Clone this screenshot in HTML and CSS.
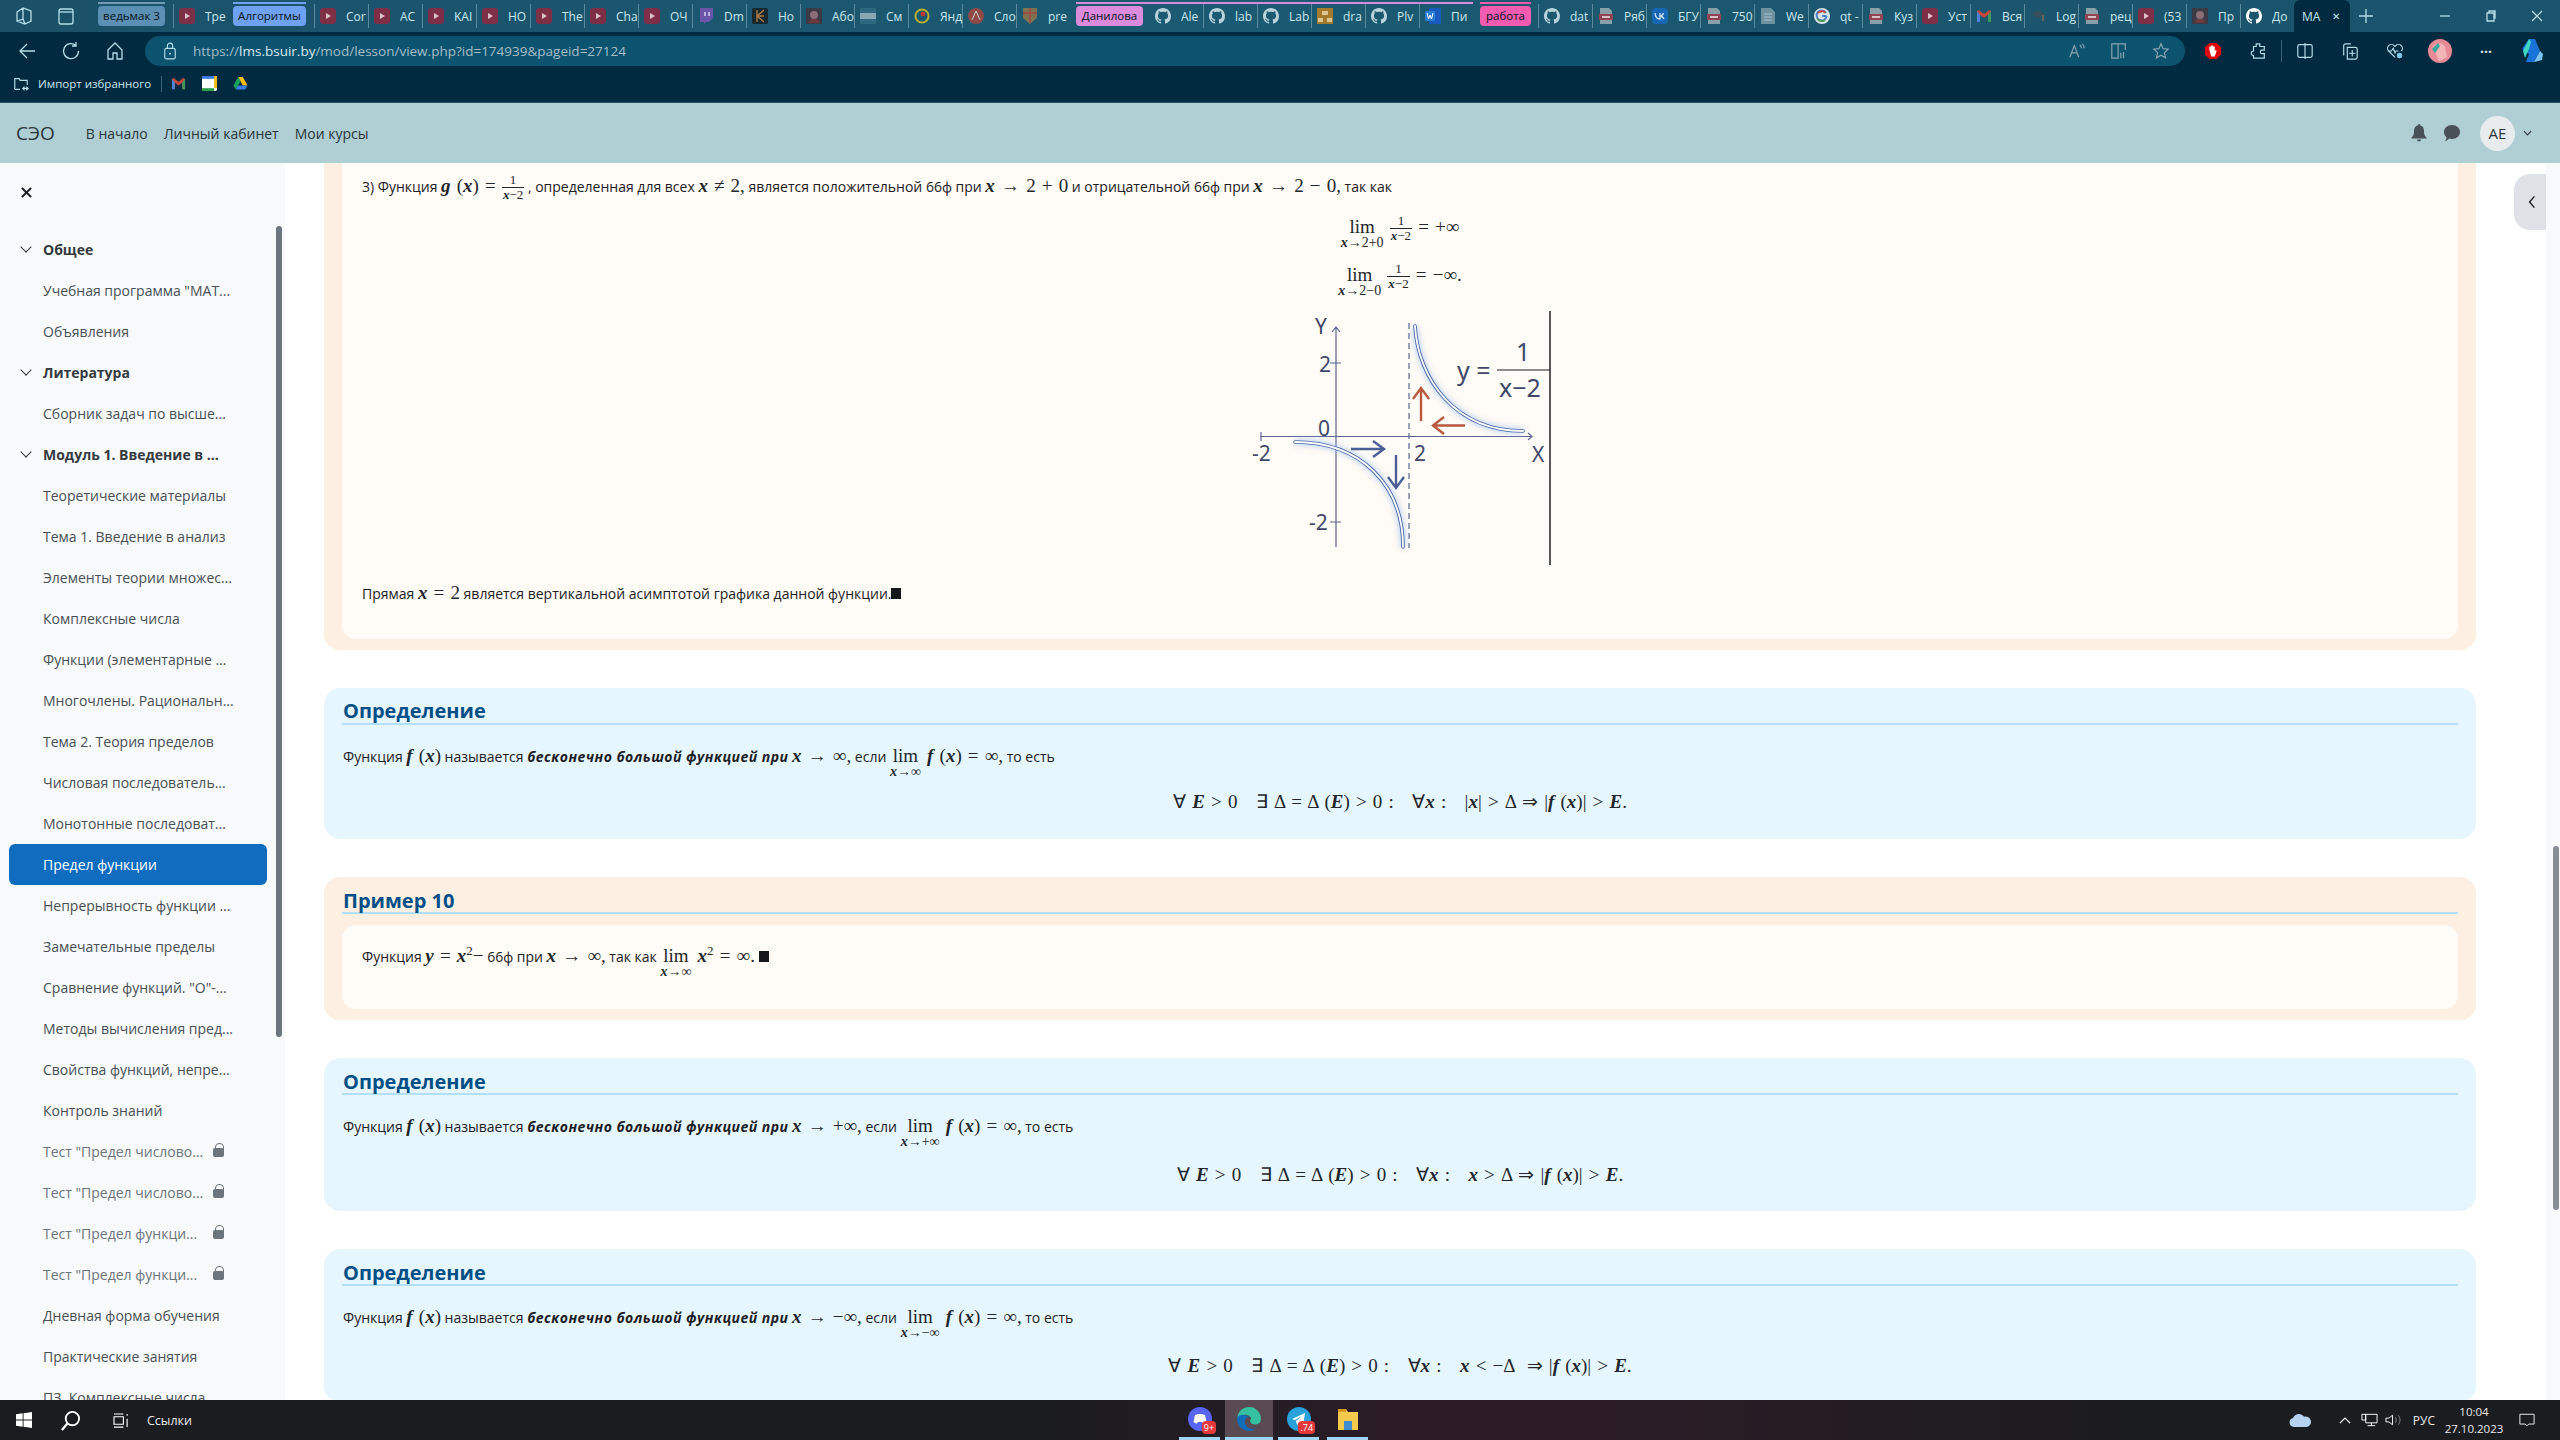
FILE: index.html
```html
<!DOCTYPE html>
<html lang="ru">
<head>
  <meta charset="UTF-8" />
  <title>Предел функции</title>
  <link rel="stylesheet" href="styles.css">
</head>
<body>
  <!-- icon sprite -->
  <svg class="sprite" xmlns="http://www.w3.org/2000/svg">
    <symbol id="yt" viewBox="0 0 16 16"><rect x="0" y="0" width="16" height="16" rx="3" fill="#7d2f47"/><path d="M6 5l5 3-5 3z" fill="#d9c3c8"/></symbol>
    <symbol id="gh" viewBox="0 0 16 16"><path fill="#b9d3dc" d="M8 0C3.58 0 0 3.58 0 8c0 3.54 2.29 6.53 5.47 7.59.4.07.55-.17.55-.38 0-.19-.01-.82-.01-1.49-2.01.37-2.53-.49-2.69-.94-.09-.23-.48-.94-.82-1.13-.28-.15-.68-.52-.01-.53.63-.01 1.08.58 1.23.82.72 1.21 1.87.87 2.33.66.07-.52.28-.87.51-1.07-1.78-.2-3.64-.89-3.64-3.95 0-.87.31-1.59.82-2.15-.08-.2-.36-1.02.08-2.12 0 0 .67-.21 2.2.82.64-.18 1.32-.27 2-.27.68 0 1.36.09 2 .27 1.53-1.04 2.2-.82 2.2-.82.44 1.1.16 1.92.08 2.12.51.56.82 1.27.82 2.15 0 3.07-1.87 3.75-3.65 3.95.29.25.54.73.54 1.48 0 1.07-.01 1.93-.01 2.2 0 .21.15.46.55.38A8.013 8.013 0 0016 8c0-4.42-3.58-8-8-8z"/></symbol>
    <symbol id="ghw" viewBox="0 0 16 16"><path fill="#fff" d="M8 0C3.58 0 0 3.58 0 8c0 3.54 2.29 6.53 5.47 7.59.4.07.55-.17.55-.38 0-.19-.01-.82-.01-1.49-2.01.37-2.53-.49-2.69-.94-.09-.23-.48-.94-.82-1.13-.28-.15-.68-.52-.01-.53.63-.01 1.08.58 1.23.82.72 1.21 1.87.87 2.33.66.07-.52.28-.87.51-1.07-1.78-.2-3.64-.89-3.64-3.95 0-.87.31-1.59.82-2.15-.08-.2-.36-1.02.08-2.12 0 0 .67-.21 2.2.82.64-.18 1.32-.27 2-.27.68 0 1.36.09 2 .27 1.53-1.04 2.2-.82 2.2-.82.44 1.1.16 1.92.08 2.12.51.56.82 1.27.82 2.15 0 3.07-1.87 3.75-3.65 3.95.29.25.54.73.54 1.48 0 1.07-.01 1.93-.01 2.2 0 .21.15.46.55.38A8.013 8.013 0 0016 8c0-4.42-3.58-8-8-8z"/></symbol>
    <symbol id="pdf" viewBox="0 0 16 16"><path d="M2 0h9l3 3v13H2z" fill="#8aa0a8"/><rect x="1" y="6" width="14" height="6" fill="#8e4452"/><rect x="4" y="8" width="8" height="2" fill="#d9c3c8"/></symbol>
    <symbol id="twitch" viewBox="0 0 16 16"><path d="M2 0h13v10l-4 4H8l-2 2v-2H2z" fill="#6a55a8"/><path d="M7 4v4M11 4v4" stroke="#d8d0ef" stroke-width="1.5"/></symbol>
    <symbol id="dark" viewBox="0 0 16 16"><rect width="16" height="16" rx="2" fill="#16282e"/><path d="M5 2v12M5 8l7-6M5 8l7 6M5 8h7" stroke="#a97a45" stroke-width="1.4"/></symbol>
    <symbol id="pic" viewBox="0 0 16 16"><rect width="16" height="16" fill="#3b3a44"/><circle cx="8" cy="7" r="4" fill="#8a6d78"/><path d="M2 15l3-4h6l3 4z" fill="#6d3a42"/></symbol>
    <symbol id="hd" viewBox="0 0 16 16"><rect width="16" height="16" fill="#2d6a80"/><rect y="5" width="16" height="6" fill="#88a8b3"/></symbol>
    <symbol id="ya" viewBox="0 0 16 16"><circle cx="8" cy="8" r="6.6" fill="none" stroke="#b5ad2c" stroke-width="2"/><circle cx="9" cy="6" r="2.4" fill="#b8382c"/></symbol>
    <symbol id="abby" viewBox="0 0 16 16"><circle cx="8" cy="8" r="8" fill="#8f4a48"/><path d="M4 12l4-9 4 9" stroke="#ccc" fill="none"/></symbol>
    <symbol id="crest" viewBox="0 0 16 16"><path d="M1 0h14v10l-7 6-7-6z" fill="#7d7352"/><path d="M8 0v15M1 5h14" stroke="#a0443f" stroke-width="1.4"/></symbol>
    <symbol id="graph" viewBox="0 0 16 16"><rect width="16" height="16" fill="#a47a2c"/><path d="M5 3h6v4H5zM1 10h5v4H1zM10 10h5v4h-5z" fill="#dcc58e"/></symbol>
    <symbol id="word" viewBox="0 0 16 16"><rect x="4" y="0" width="12" height="16" rx="1" fill="#185abd"/><rect x="0" y="3" width="10" height="10" rx="1" fill="#2b7cd3"/><path d="M2 5l1.5 6L5 7l1.5 4L8 5" stroke="#fff" stroke-width="1" fill="none"/></symbol>
    <symbol id="vk" viewBox="0 0 16 16"><rect width="16" height="16" rx="4" fill="#1767b5"/><path d="M3 5c.3 4 2.5 6 5 6V5m0 3c1.5 0 3-1.400 3.500-3M8 8c1.500 0 3 1.200 4 3" stroke="#cfe3f5" stroke-width="1.300" fill="none"/></symbol>
    <symbol id="doc" viewBox="0 0 16 16"><path d="M1 0h10l4 4v12H1z" fill="#6f92a0"/><path d="M4 6h8M4 9h8M4 12h8" stroke="#a8c0ca"/></symbol>
    <symbol id="google" viewBox="0 0 16 16"><circle cx="8" cy="8" r="8" fill="#d9e4e8"/><path d="M12.500 8H8M12 5a5 5 0 1 0 .6 3" fill="none" stroke="#4b7fc9" stroke-width="2"/><path d="M4.200 5A5 5 0 0 1 11.500 4.500" fill="none" stroke="#c9483a" stroke-width="2"/><path d="M3.500 10.500A5 5 0 0 0 11 12" fill="none" stroke="#4a9a58" stroke-width="2"/></symbol>
    <symbol id="gmail" viewBox="0 0 16 16"><path d="M1 3v11h3V7l4 3 4-3v7h3V3l-2-1-5 4-5-4z" fill="#c5453b"/><path d="M1 3v11h3V7z" fill="#4a84d8"/><path d="M12 7v7h3V3z" fill="#3d9a5b"/></symbol>
    <symbol id="cap" viewBox="0 0 16 16"><path d="M1 6l7-4 7 4-7 4z" fill="#35505b"/><path d="M13 7v6" stroke="#a97a45"/></symbol>
    <symbol id="cal" viewBox="0 0 16 16"><rect width="16" height="16" rx="1.500" fill="#fff"/><path d="M0 0h16v3H0z" fill="#3b79e4"/><path d="M13 0h3v13h-3z" fill="#f1bb12"/><path d="M0 13h13v3H0z" fill="#28a14e"/></symbol>
    <symbol id="drive" viewBox="0 0 16 16"><path d="M5.500 1h5l5 9h-5z" fill="#f8bf16"/><path d="M5.500 1L.5 10l2.500 4.500L8 5.500z" fill="#18a15b"/><path d="M5.500 10h10L13 14.500H3z" fill="#3a7de8"/></symbol>
  </svg>

  <!-- tab strip -->
  <div class="tabstrip">
    <svg class="strip-icon" viewBox="0 0 20 20" width="20" height="20"><path d="M3 6l6-4 8 3v10l-6 3-8-3z M9 2v11l-6 2 M9 13l2 5" class="line"/></svg>
    <svg class="strip-icon" viewBox="0 0 20 20" width="20" height="20"><rect x="3" y="3" width="14" height="15" rx="2" class="line"/><path d="M3 6h14" class="line"/></svg>

    <div class="tab-group group-steel"><span class="pill">ведьмак 3</span></div>
    <div class="tab"><svg class="fav"><use href="#yt"/></svg><span>Тре</span></div>
    <div class="tab-group group-blue"><span class="pill">Алгоритмы</span></div>
    <div class="tab"><svg class="fav"><use href="#yt"/></svg><span>Cor</span></div>
    <div class="tab"><svg class="fav"><use href="#yt"/></svg><span>AC</span></div>
    <div class="tab"><svg class="fav"><use href="#yt"/></svg><span>KAI</span></div>
    <div class="tab"><svg class="fav"><use href="#yt"/></svg><span>HO</span></div>
    <div class="tab"><svg class="fav"><use href="#yt"/></svg><span>The</span></div>
    <div class="tab"><svg class="fav"><use href="#yt"/></svg><span>Cha</span></div>
    <div class="tab"><svg class="fav"><use href="#yt"/></svg><span>ОЧ</span></div>
    <div class="tab"><svg class="fav"><use href="#twitch"/></svg><span>Dm</span></div>
    <div class="tab"><svg class="fav"><use href="#dark"/></svg><span>Ho</span></div>
    <div class="tab"><svg class="fav"><use href="#pic"/></svg><span>Або</span></div>
    <div class="tab"><svg class="fav"><use href="#hd"/></svg><span>См</span></div>
    <div class="tab"><svg class="fav"><use href="#ya"/></svg><span>Янд</span></div>
    <div class="tab"><svg class="fav"><use href="#abby"/></svg><span>Сло</span></div>
    <div class="tab"><svg class="fav"><use href="#crest"/></svg><span>pre</span></div>
    <div class="tab-group group-violet">
      <span class="pill">Данилова</span>
      <div class="tab first"><svg class="fav"><use href="#gh"/></svg><span>Ale</span></div>
      <div class="tab"><svg class="fav"><use href="#gh"/></svg><span>lab</span></div>
      <div class="tab"><svg class="fav"><use href="#gh"/></svg><span>Lab</span></div>
      <div class="tab"><svg class="fav"><use href="#graph"/></svg><span>dra</span></div>
      <div class="tab"><svg class="fav"><use href="#gh"/></svg><span>Plv</span></div>
      <div class="tab"><svg class="fav"><use href="#word"/></svg><span>Пи</span></div>
    </div>
    <div class="tab-group group-pink"><span class="pill">работа</span></div>
    <div class="tab"><svg class="fav"><use href="#gh"/></svg><span>dat</span></div>
    <div class="tab"><svg class="fav"><use href="#pdf"/></svg><span>Ряб</span></div>
    <div class="tab"><svg class="fav"><use href="#vk"/></svg><span>БГУ</span></div>
    <div class="tab"><svg class="fav"><use href="#pdf"/></svg><span>750</span></div>
    <div class="tab"><svg class="fav"><use href="#doc"/></svg><span>We</span></div>
    <div class="tab"><svg class="fav"><use href="#google"/></svg><span>qt -</span></div>
    <div class="tab"><svg class="fav"><use href="#pdf"/></svg><span>Куз</span></div>
    <div class="tab"><svg class="fav"><use href="#yt"/></svg><span>Уст</span></div>
    <div class="tab"><svg class="fav"><use href="#gmail"/></svg><span>Вся</span></div>
    <div class="tab"><svg class="fav"><use href="#cap"/></svg><span>Log</span></div>
    <div class="tab"><svg class="fav"><use href="#pdf"/></svg><span>рец</span></div>
    <div class="tab"><svg class="fav"><use href="#yt"/></svg><span>(53</span></div>
    <div class="tab"><svg class="fav"><use href="#pic"/></svg><span>Пр</span></div>
    <div class="tab"><svg class="fav"><use href="#ghw"/></svg><span>До</span></div>
    <div class="tab-active"><span>MA</span><b>✕</b></div>
    <svg class="new-tab" viewBox="0 0 16 16" width="16" height="16"><path d="M8 1v14M1 8h14" class="line"/></svg>

    <div class="win-controls">
      <svg viewBox="0 0 12 12" width="12" height="12"><path d="M1 6h10" class="line"/></svg>
      <svg viewBox="0 0 12 12" width="12" height="12"><path d="M2 3h7v8H2zM4 3V1h6v7H9" class="line"/></svg>
      <svg viewBox="0 0 12 12" width="12" height="12"><path d="M1 1l10 10M11 1L1 11" class="line"/></svg>
    </div>
  </div>

  <!-- toolbar -->
  <div class="toolbar">
    <div class="nav-btns">
      <svg viewBox="0 0 20 20" width="20" height="20"><path d="M18 10H3M10 3l-7 7 7 7" class="line"/></svg>
      <svg viewBox="0 0 20 20" width="20" height="20"><path d="M15 4.500A7.500 7.500 0 1 0 17.500 10M15 1v4h-4" class="line"/></svg>
      <svg viewBox="0 0 20 20" width="20" height="20"><path d="M3 9l7-7 7 7v9h-5v-6H8v6H3z" class="line"/></svg>
    </div>
    <div class="addressbar">
      <svg class="lock" viewBox="0 0 16 20" width="14" height="18"><rect x="2" y="7" width="12" height="12" rx="2" class="line"/><path d="M5 7V4a3 3 0 0 1 6 0v3" class="line"/><circle cx="8" cy="13" r="1" fill="#d7ebf2"/></svg>
      <span class="url">https://<em>lms.bsuir.by</em>/mod/lesson/view.php?id=174939&amp;pageid=27124</span>
      <div class="addr-actions">
        <svg viewBox="0 0 20 20" width="18" height="18"><path d="M2 17L7 4l5 13M4 12h6M13 3a5 5 0 0 1 2 4M16 2a7 7 0 0 1 2 5" class="dim"/></svg>
        <svg viewBox="0 0 20 20" width="18" height="18"><path d="M2 2h7v16H2zM9 2h8v7M12 12v6M15 11v7" class="dim"/></svg>
        <svg viewBox="0 0 20 20" width="18" height="18"><path d="M10 2l2.400 5.400 5.600.6-4.200 3.800 1.200 5.700L10 14.600 5 17.500l1.200-5.700L2 8l5.600-.6z" class="dim"/></svg>
      </div>
    </div>
    <div class="tool-icons">
      <svg viewBox="0 0 20 20" width="18" height="20"><path d="M6 1h8l5 5v8l-5 5H6l-5-5V6z" fill="#e0060b"/><path d="M6 9V5h2v4-5h2v5-4h2v5l1-1 1 1-2 6H8z" fill="#fff"/></svg>
      <svg viewBox="0 0 20 20" width="18" height="20"><path d="M8 2h4v3h5v4h-2.500a2 2 0 0 0 0 4H17v5H5v-3a2.500 2.500 0 0 1 0-5V5h3z" class="line"/></svg>
      <i class="tool-sep"></i>
      <svg viewBox="0 0 20 20" width="18" height="20"><rect x="2" y="3" width="16" height="14" rx="2" class="line"/><path d="M10 1v18" class="line"/></svg>
      <svg viewBox="0 0 20 20" width="18" height="20"><path d="M3 15V4a2 2 0 0 1 2-2h6M7 6h9a2 2 0 0 1 2 2v9a2 2 0 0 1-2 2H7zM12.500 9v7M9 12.500h7" class="line"/></svg>
      <svg viewBox="0 0 20 20" width="18" height="20"><path d="M10 17L3 10a4 4 0 0 1 6-6l1 1 1-1a4 4 0 0 1 6 6M2 10h4l2-3 2 5 1-2h3" class="line"/><circle cx="15" cy="15" r="3" fill="#7ec8e8"/></svg>
      <svg class="profile" viewBox="0 0 24 24" width="24" height="24"><circle cx="12" cy="12" r="12" fill="#e68a97"/><path d="M5 8c4-6 10-4 12 0l2 10-8 4z" fill="#f3b6b8"/><path d="M4 10l6-6 2 3-5 7z" fill="#35a8a0"/></svg>
      <span class="more">···</span>
      <svg viewBox="0 0 24 26" width="24" height="26"><path d="M9 1h6l5 12-6 11H6l3-8-7-5z" fill="#1a73d8"/><path d="M9 1L3 13l2 7 4-9 2-7z" fill="#3ed6c4"/><path d="M20 13l-6 11 8-2 1-6z" fill="#7ac4f4"/></svg>
    </div>
  </div>

  <!-- bookmarks -->
  <div class="bookmarks">
    <svg viewBox="0 0 18 18" width="16" height="16"><path d="M2 15V3h5l1 2h8v5M2 15h6M11 14h6M13 12l-2 2 2 2M15 12l2 2-2 2" class="line"/></svg>
    <span class="bm-label">Импорт избранного</span>
    <i class="bm-sep"></i>
    <svg class="bm-icon"><use href="#gmail"/></svg>
    <svg class="bm-icon"><use href="#cal"/></svg>
    <svg class="bm-icon"><use href="#drive"/></svg>
  </div>

  <!-- site navbar -->
  <nav class="navbar">
    <a class="brand">СЭО</a>
    <a class="nav-link">В начало</a>
    <a class="nav-link">Личный кабинет</a>
    <a class="nav-link">Мои курсы</a>
    <div class="nav-right">
      <svg viewBox="0 0 16 18" width="16" height="18"><path d="M8 0a1.500 1.500 0 0 1 1.500 1.500C12 2.200 13 4.500 13 7c0 4 1 5 2.500 6.500v1h-15v-1C2 12 3 11 3 7c0-2.500 1-4.800 3.500-5.500A1.500 1.500 0 0 1 8 0zM6 15.500h4a2 2 0 0 1-4 0z" fill="#495057"/></svg>
      <svg viewBox="0 0 18 18" width="18" height="18"><path d="M9 1c4.500 0 8 3 8 7s-3.500 7-8 7c-1 0-2-.2-2.800-.5C5 15.500 3.500 17 2 17c1-1 1.500-2.500 1.500-3.500C2 12 1 10 1 8c0-4 3.500-7 8-7z" fill="#495057"/></svg>
      <span class="avatar">AE</span>
      <svg viewBox="0 0 10 6" width="9" height="6"><path d="M1 1l4 4 4-4" fill="none" stroke="#343a40" stroke-width="1.300"/></svg>
    </div>
  </nav>

  <div class="page">
    <aside class="sidebar">
      <svg class="close-x" viewBox="0 0 12 12" width="11" height="11"><path d="M1 1l10 10M11 1L1 11" fill="none" stroke="#1d2125" stroke-width="2.200"/></svg>
      <ul class="course-index">
        <li class="section">Общее</li>
        <li>Учебная программа "МАТ...</li>
        <li>Объявления</li>
        <li class="section">Литература</li>
        <li>Сборник задач по высше...</li>
        <li class="section">Модуль 1. Введение в ...</li>
        <li>Теоретические материалы</li>
        <li>Тема 1. Введение в анализ</li>
        <li>Элементы теории множес...</li>
        <li>Комплексные числа</li>
        <li>Функции (элементарные ...</li>
        <li>Многочлены. Рациональн...</li>
        <li>Тема 2. Теория пределов</li>
        <li>Числовая последователь...</li>
        <li>Монотонные последоват...</li>
        <li class="active">Предел функции</li>
        <li>Непрерывность функции ...</li>
        <li>Замечательные пределы</li>
        <li>Сравнение функций. "О"-...</li>
        <li>Методы вычисления пред...</li>
        <li>Свойства функций, непре...</li>
        <li>Контроль знаний</li>
        <li class="locked">Тест "Предел числово...</li>
        <li class="locked">Тест "Предел числово...</li>
        <li class="locked">Тест "Предел функци...</li>
        <li class="locked">Тест "Предел функци...</li>
        <li>Дневная форма обучения</li>
        <li>Практические занятия</li>
        <li>ПЗ. Комплексные числа</li>
      </ul>
      <div class="side-scroll"></div>
    </aside>

    <main class="content">
      <!-- scrolled example -->
      <section class="card card-ex card-cut">
        <div class="card-inner inner-cut">
          <p class="row">3) Функция <span class="m"><i>g</i> (<i>x</i>) = <span class="frac"><span>1</span><span class="den"><i>x</i>−2</span></span></span> , определенная для всех <span class="m"><i>x</i> ≠ 2,</span> является положительной 66ф при <span class="m"><i>x</i> → 2 + 0</span> и отрицательной 66ф при <span class="m"><i>x</i> → 2 − 0,</span> так как</p>
          <p class="row center lim-row"><span class="m"><span class="lim">lim<small><i>x</i>→2+0</small></span> <span class="frac"><span>1</span><span class="den"><i>x</i>−2</span></span> = +∞</span></p>
          <p class="row center lim-row second"><span class="m"><span class="lim">lim<small><i>x</i>→2−0</small></span> <span class="frac"><span>1</span><span class="den"><i>x</i>−2</span></span> = −∞.</span></p>
          <svg class="graph" viewBox="0 0 360 280" width="360" height="280">
            <defs><filter id="glow" x="-20%" y="-20%" width="140%" height="140%"><feGaussianBlur stdDeviation="3"/></filter></defs>
            <path d="M40 137.500H312M308 134l4 3.500-4 3.500M41 133v9M116 28v220M112 33l4-5 4 5M110 64h11M110 223h11" fill="none" stroke="#5a6590" stroke-width="1.200"/>
            <path d="M189 24v225" stroke="#5a6590" stroke-width="1.200" stroke-dasharray="6 4"/>
            <path d="M195 27C198 80 235 132 303 132M75 143C140 143 183 185 183 248" fill="none" stroke="#9cc0ee" stroke-width="4" filter="url(#glow)"/>
            <path d="M195 27C198 80 235 132 303 132M75 143C140 143 183 185 183 248" fill="none" stroke="#4a68a8" stroke-width="3.600" stroke-linecap="round"/>
            <path d="M195 27C198 80 235 132 303 132M75 143C140 143 183 185 183 248" fill="none" stroke="#fff" stroke-width="1.800" stroke-linecap="round"/>
            <path d="M201 122V90M193 100l8-11 8 11M245 126.500H213M224 118l-11 8.500 11 8.500" fill="none" stroke="#b9583f" stroke-width="2.400"/>
            <path d="M131 150h33M153 142l11 8-11 8M176 156v32M168 178l8 11 8-11" fill="none" stroke="#4a5f95" stroke-width="2.400"/>
            <path d="M277 71h53" stroke="#1d2125" stroke-width="1.200"/>
            <path d="M330 12v254" stroke="#1d2125" stroke-width="1.500"/>
            <g class="graph-text">
              <text x="95" y="35">Y</text>
              <text x="99" y="73">2</text>
              <text x="98" y="137">0</text>
              <text x="32" y="162">-2</text>
              <text x="194" y="162">2</text>
              <text x="312" y="163">X</text>
              <text x="89" y="231">-2</text>
              <text x="237" y="81" class="big">y =</text>
              <text x="296" y="62" class="big">1</text>
              <text x="279" y="98" class="big">x−2</text>
            </g>
          </svg>
          <p class="row row-last">Прямая <span class="m"><i>x</i> = 2</span> является вертикальной асимптотой графика данной функции.<span class="qed"></span></p>
        </div>
      </section>

      <section class="card card-def">
        <h3 class="card-title">Определение</h3>
        <p class="row text-row">Функция <span class="m"><i>f</i> (<i>x</i>)</span> называется <b><i>бесконечно большой функцией при</i></b> <span class="m"><i>x</i> → ∞,</span> если <span class="m"><span class="lim">lim<small><i>x</i>→∞</small></span> <i>f</i> (<i>x</i>) = ∞,</span> то есть</p>
        <p class="row center formula"><span class="m">∀ <i>E</i> &gt; 0 &nbsp; ∃ Δ = Δ (<i>E</i>) &gt; 0 : &nbsp; ∀<i>x</i> : &nbsp; |<i>x</i>| &gt; Δ ⇒ |<i>f</i> (<i>x</i>)| &gt; <i>E</i>.</span></p>
      </section>

      <section class="card card-ex">
        <h3 class="card-title">Пример 10</h3>
        <div class="card-inner inner-short">
          <p class="row">Функция <span class="m"><i>y</i> = <i>x</i><sup>2</sup>−</span> 66ф при <span class="m"><i>x</i> → ∞,</span> так как <span class="m"><span class="lim">lim<small><i>x</i>→∞</small></span> <i>x</i><sup>2</sup> = ∞.</span> <span class="qed"></span></p>
        </div>
      </section>

      <section class="card card-def card-wide">
        <h3 class="card-title">Определение</h3>
        <p class="row text-row">Функция <span class="m"><i>f</i> (<i>x</i>)</span> называется <b><i>бесконечно большой функцией при</i></b> <span class="m"><i>x</i> → +∞,</span> если <span class="m"><span class="lim">lim<small><i>x</i>→+∞</small></span> <i>f</i> (<i>x</i>) = ∞,</span> то есть</p>
        <p class="row center formula"><span class="m">∀ <i>E</i> &gt; 0 &nbsp; ∃ Δ = Δ (<i>E</i>) &gt; 0 : &nbsp; ∀<i>x</i> : &nbsp; <i>x</i> &gt; Δ ⇒ |<i>f</i> (<i>x</i>)| &gt; <i>E</i>.</span></p>
      </section>

      <section class="card card-def card-wide">
        <h3 class="card-title">Определение</h3>
        <p class="row text-row">Функция <span class="m"><i>f</i> (<i>x</i>)</span> называется <b><i>бесконечно большой функцией при</i></b> <span class="m"><i>x</i> → −∞,</span> если <span class="m"><span class="lim">lim<small><i>x</i>→−∞</small></span> <i>f</i> (<i>x</i>) = ∞,</span> то есть</p>
        <p class="row center formula"><span class="m">∀ <i>E</i> &gt; 0 &nbsp; ∃ Δ = Δ (<i>E</i>) &gt; 0 : &nbsp; ∀<i>x</i> : &nbsp; <i>x</i> &lt; −Δ &nbsp;⇒ |<i>f</i> (<i>x</i>)| &gt; <i>E</i>.</span></p>
      </section>

      <div class="drawer-toggle"><svg viewBox="0 0 10 16" width="8" height="14"><path d="M8 1L2 8l6 7" fill="none" stroke="#1d2125" stroke-width="1.800"/></svg></div>
      <div class="page-scroll"><div class="page-thumb"></div></div>
    </main>
  </div>

  <!-- windows taskbar -->
  <footer class="taskbar">
    <svg class="tb-start" viewBox="0 0 18 18" width="16" height="16"><path d="M0 2.500l7.500-1v7H0zM8.500 1.300L18 0v8.500H8.500zM0 9.500h7.500v7l-7.500-1zM8.500 9.500H18V18l-9.500-1.300z" fill="#fff"/></svg>
    <svg class="tb-search" viewBox="0 0 22 22" width="21" height="21"><circle cx="13" cy="9" r="7" fill="none" stroke="#fff" stroke-width="2"/><path d="M8 14l-6 7" stroke="#fff" stroke-width="2.400"/></svg>
    <svg class="tb-view" viewBox="0 0 18 16" width="17" height="15"><path d="M1 1h10M1 15h10M1 4h10v8H1zM15 1v2M15 6v9" fill="none" stroke="#fff" stroke-width="1.200"/></svg>
    <span class="tb-links">Ссылки</span>
    <div class="tb-apps">
      <span class="tb-app"><svg viewBox="0 0 24 24" width="24" height="24"><circle cx="12" cy="12" r="12" fill="#5865f2"/><path d="M7 8c3-1.500 7-1.500 10 0l1.500 7c-1.500 1-3 1.500-3.500 1.500l-1-1.500h-4l-1 1.500c-.5 0-2-.5-3.500-1.500z" fill="#fff"/></svg><b class="badge">9+</b></span>
      <span class="tb-app current"><svg viewBox="0 0 24 24" width="26" height="26"><path d="M12 1a11 11 0 0 1 11 11c0 3-2 5-5 5-3 0-5-1.500-5-3.500 0-1 .5-1.500 1-2C13 9 10 7.500 7 8.500 3.500 9.500 1 13 1.500 9 2.500 4.500 7 1 12 1z" fill="#35c1a0"/><path d="M1 12c0 6 5 11 11 11 3 0 5-1 6.500-2.500-4 1.500-8 0-9.500-3C7 13.500 9 10 12.500 10 9 8 1 7 1 12z" fill="#0f6db8"/></svg></span>
      <span class="tb-app"><svg viewBox="0 0 24 24" width="24" height="24"><circle cx="12" cy="12" r="12" fill="#2aa1da"/><path d="M5 12l13-6-2 13-4-3-2 2-1-4 6-5-7 4z" fill="#fff"/></svg><b class="badge">.74</b></span>
      <span class="tb-app"><svg viewBox="0 0 24 24" width="24" height="24"><path d="M2 2h8l2 3h10v18H2z" fill="#f5c94c"/><path d="M2 2h8v3H2z" fill="#d69a1c"/><path d="M8 14h8v9H8z" fill="#3f8fd0"/></svg></span>
    </div>
    <div class="tb-tray">
      <svg viewBox="0 0 26 16" width="25" height="15"><path d="M6 15a5 5 0 0 1-1-9.800A7 7 0 0 1 17 4a5.500 5.500 0 0 1 3 11z" fill="#b6d3f2"/></svg>
      <svg class="tr-caret" viewBox="0 0 12 8" width="12" height="8"><path d="M1 7l5-5 5 5" fill="none" stroke="#fff" stroke-width="1.200"/></svg>
      <svg class="tr-net" viewBox="0 0 18 14" width="17" height="14"><path d="M5 1h12v9H5zM11 10v3M7 13h8M1 1h4v6H1z" fill="none" stroke="#fff"/></svg>
      <svg class="tr-vol" viewBox="0 0 18 14" width="17" height="14"><path d="M1 5h3l4-3v10L4 9H1z" fill="none" stroke="#fff"/><path d="M11 4a5 5 0 0 1 0 6M14 2a8 8 0 0 1 0 10" fill="none" stroke="#888"/></svg>
      <span class="tr-lang">РУС</span>
      <span class="tr-clock">10:04<br>27.10.2023</span>
      <svg class="tr-note" viewBox="0 0 18 16" width="16" height="15"><path d="M1 1h16v11h-6l-2 2-2-2H1z" fill="none" stroke="#fff"/></svg>
    </div>
  </footer>
</body>
</html>
```
FILE: styles.css
```css
* {
  box-sizing: border-box;
}
html, body {
  margin: 0;
  height: 100%;
}
body {
  display: flex;
  flex-direction: column;
  height: 1440px;
  overflow: hidden;
  font-family: "Open Sans", "Noto Sans", sans-serif;
  color: #1d2125;
}
p, h3, ul {
  margin: 0;
  padding: 0;
}
.sprite {
  position: absolute;
  width: 0;
  height: 0;
}
.line {
  fill: none;
  stroke: #b5dde8;
  stroke-width: 1.3;
}
.dim {
  fill: none;
  stroke: #8aa5b0;
  stroke-width: 1.3;
}

/* tab strip */
.tabstrip {
  display: flex;
  align-items: center;
  height: 32px;
  flex: none;
  padding-left: 14px;
  background: linear-gradient(90deg, #1a5169, #1b5a72 45%, #1a536b);
  color: #c8e6ee;
  font-size: 12px;
}
.strip-icon {
  flex: none;
  margin-right: 22px;
}
.strip-icon + .tab-group {
  margin-left: 0;
}
.tab {
  display: flex;
  align-items: center;
  flex: none;
  width: 54px;
  height: 24px;
  padding-left: 5px;
  border-left: 1px solid #5a8a9c;
  overflow: hidden;
}
.tab.first {
  border-left-color: transparent;
}
.tab span {
  width: 22px;
  margin-left: 10px;
  overflow: hidden;
  white-space: nowrap;
}
.fav {
  flex: none;
  width: 16px;
  height: 16px;
}
.tab-group {
  display: flex;
  align-items: center;
  flex: none;
  height: 28px;
  margin: 0 7px 0 6px;
  padding-bottom: 2px;
  border-top: 2px solid;
}
.tab-group + .tab-group {
  margin-left: 0;
}
.pill {
  flex: none;
  height: 20px;
  line-height: 20px;
  border-radius: 4px;
  color: #07141c;
  font-size: 11.5px;
  text-align: center;
  white-space: nowrap;
}
.group-steel {
  margin-right: 8px;
  border-color: #6f9bb4;
}
.group-steel .pill {
  width: 67px;
  background: #5b8fb3;
}
.group-blue {
  margin-right: 8px;
  border-color: #6ea1f2;
}
.group-blue .pill {
  width: 73px;
  background: #6ea1f2;
}
.group-violet {
  border-color: #d88bd8;
}
.group-violet .pill {
  width: 67px;
  margin-right: 6px;
  background: #da8bdc;
}
.group-pink {
  border-color: #f05aae;
}
.group-pink .pill {
  width: 51px;
  background: #f25cb0;
}
.tab-active {
  display: flex;
  align-items: center;
  justify-content: space-between;
  flex: none;
  width: 56px;
  height: 32px;
  padding: 0 10px 0 8px;
  border-radius: 6px 6px 0 0;
  background: #002a40;
}
.tab-active b {
  font-weight: 400;
  font-size: 10px;
}
.new-tab {
  margin-left: 8px;
}
.win-controls {
  display: flex;
  gap: 34px;
  margin-left: auto;
  padding-right: 17px;
}

/* toolbar */
.toolbar {
  display: flex;
  align-items: flex-end;
  height: 34px;
  flex: none;
  background: #002a40;
}
.nav-btns {
  display: flex;
  align-items: center;
  gap: 24px;
  width: 145px;
  height: 30px;
  padding-left: 17px;
}
.addressbar {
  display: flex;
  align-items: center;
  width: 2040px;
  height: 30px;
  padding: 0 15px 0 18px;
  border-radius: 15px;
  background: #0c5370;
}
.url {
  margin-left: 16px;
  font-size: 13.5px;
  color: #a3bdc7;
}
.url em {
  font-style: normal;
  color: #d5e9f0;
}
.addr-actions {
  display: flex;
  gap: 24px;
  margin-left: auto;
}
.tool-icons {
  display: flex;
  align-items: center;
  gap: 27px;
  height: 30px;
  padding-left: 19px;
}
.tool-sep {
  width: 1px;
  height: 22px;
  margin: 0 -13px;
  background: #3a6377;
}
.profile {
  margin-left: -3px;
}
.more {
  margin: 0 1px;
  color: #cfe6ee;
  font-weight: 700;
  font-size: 14px;
}

/* bookmarks */
.bookmarks {
  display: flex;
  align-items: center;
  height: 37px;
  flex: none;
  padding: 0 0 1px 13px;
  border-bottom: 1px solid #1b5468;
  background: #002a40;
  color: #c8e6ee;
  font-size: 11.5px;
}
.bm-label {
  margin-left: 9px;
}
.bm-sep {
  width: 1px;
  height: 16px;
  margin: 0 9px 0 10px;
  background: #3a6377;
}
.bm-icon {
  width: 15px;
  height: 15px;
  margin-right: 16px;
}

/* site navbar */
.navbar {
  display: flex;
  align-items: center;
  height: 60px;
  flex: none;
  padding: 0 28px 0 16px;
  background: #afcfd4;
  font-size: 14px;
  color: #29363a;
}
.brand {
  margin-right: 31px;
  font-size: 19px;
}
.nav-link {
  margin-right: 16px;
}
.nav-right {
  display: flex;
  align-items: center;
  margin-left: auto;
}
.nav-right svg:nth-child(2) {
  margin: 0 19px 0 16px;
}
.avatar {
  display: flex;
  align-items: center;
  justify-content: center;
  width: 35px;
  height: 35px;
  margin-right: 8px;
  border-radius: 50%;
  background: #e9ecef;
  font-size: 15px;
}

/* page */
.page {
  display: flex;
  flex: 1;
  min-height: 0;
}
.sidebar {
  position: relative;
  flex: none;
  width: 285px;
  padding: 24px 0 0 9px;
  overflow: hidden;
  background: #f8f9fa;
}
.close-x {
  display: block;
  margin-left: 12px;
}
.course-index {
  margin-top: 31px;
  list-style: none;
  font-size: 14px;
  color: #495057;
}
.course-index li {
  position: relative;
  width: 258px;
  height: 41px;
  line-height: 41px;
  padding-left: 34px;
  white-space: nowrap;
}
.course-index .section {
  font-weight: 700;
  color: #343a40;
}
.course-index .section::before {
  content: "";
  position: absolute;
  left: 13px;
  top: 14px;
  width: 7px;
  height: 7px;
  border-right: 1.5px solid #343a40;
  border-bottom: 1.5px solid #343a40;
  transform: rotate(45deg);
}
.course-index .active {
  border-radius: 6px;
  background: #0f6cbf;
  color: #fff;
}
.course-index .locked {
  color: #6c757d;
}
.course-index .locked::after {
  content: "";
  position: absolute;
  left: 204px;
  top: 17px;
  width: 11px;
  height: 9px;
  border-radius: 2px;
  background: #6c757d;
}
.course-index .locked::before {
  content: "";
  position: absolute;
  left: 206px;
  top: 12px;
  width: 7px;
  height: 7px;
  border: 1.5px solid #6c757d;
  border-radius: 4px 4px 0 0;
}
.side-scroll {
  position: absolute;
  left: 276px;
  top: 63px;
  width: 6px;
  height: 811px;
  border-radius: 3px;
  background: #6c757d;
}

/* content */
.content {
  position: relative;
  flex: 1;
  min-width: 0;
  padding: 0 84px 0 39px;
  overflow: hidden;
  background: #fff;
  font-size: 14px;
}
.card {
  margin-bottom: 38px;
  padding: 0 18px;
  border-radius: 16px;
}
.card-def {
  height: 151px;
  background: #e6f6fe;
}
.card-wide {
  height: 153px;
}
.card-ex {
  height: 143px;
  background: #feefe3;
}
.card-cut {
  height: 487px;
  padding-bottom: 11px;
  border-radius: 0 0 16px 16px;
}
.card-title {
  height: 37px;
  padding: 8px 0 0 1px;
  border-bottom: 2px solid #b3dfff;
  font-size: 20px;
  line-height: 30px;
  font-weight: 700;
  color: #014f86;
}
.card-wide .card-title,
.card-ex .card-title {
  padding-top: 9px;
}
.card-inner {
  padding: 0 20px;
  border-radius: 14px;
  background: #fffbf6;
}
.inner-cut {
  height: 476px;
  padding-top: 3px;
  border-radius: 0 0 14px 14px;
}
.inner-short {
  height: 84px;
  margin-top: 11px;
  padding-top: 11px;
}
.row {
  height: 40px;
  line-height: 40px;
  white-space: nowrap;
}
.row b {
  letter-spacing: .46px;
}
.center {
  text-align: center;
}
.lim-row {
  height: 48px;
  margin-top: 1px;
}
.lim-row.second {
  height: 44px;
  margin-top: 0;
}
.row-last {
  height: 28px;
  line-height: 28px;
}
.text-row {
  height: 44px;
  margin-top: 9px;
  padding-left: 1px;
  line-height: 44px;
}
.formula {
  height: 44px;
  margin-top: 2px;
  line-height: 44px;
}
.card-wide .text-row {
  height: 46px;
}
.card-wide .formula {
  height: 46px;
  line-height: 46px;
}
.graph {
  display: block;
  margin: 0 auto;
}
.graph-text {
  font-family: "Noto Sans", sans-serif;
  font-size: 21px;
  fill: #3f4868;
}
.graph-text .big {
  font-size: 25px;
}
.qed {
  display: inline-block;
  width: 10px;
  height: 11px;
  background: #15181b;
}

/* math */
.m {
  font-family: "Liberation Serif", serif;
  font-size: 19px;
  font-weight: 400;
  word-spacing: 1.4px;
  color: #23272b;
}
.m i {
  font-weight: 700;
}
.m sup {
  font-size: 13px;
  line-height: 0;
}
.frac {
  display: inline-flex;
  flex-direction: column;
  align-items: center;
  vertical-align: middle;
  font-size: 13px;
  line-height: 14px;
}
.frac .den {
  border-top: 1px solid #23272b;
  padding: 0 1px;
}
.lim {
  display: inline-flex;
  flex-direction: column;
  align-items: center;
  line-height: 1;
}
.lim small {
  font-size: 14px;
  line-height: 11px;
  margin-top: 1px;
}

/* overlays */
.drawer-toggle {
  position: absolute;
  right: 14px;
  top: 11px;
  display: flex;
  align-items: center;
  justify-content: center;
  width: 32px;
  height: 56px;
  padding-left: 3px;
  border-radius: 16px 0 0 16px;
  background: #dee2e6;
}
.page-scroll {
  position: absolute;
  right: 0;
  top: 0;
  bottom: 0;
  width: 14px;
  background: #f8f9fb;
}
.page-thumb {
  position: absolute;
  left: 7px;
  top: 683px;
  width: 6px;
  height: 364px;
  border-radius: 3px;
  background: #868d95;
}

/* taskbar */
.taskbar {
  display: flex;
  align-items: center;
  position: relative;
  height: 40px;
  flex: none;
  padding-left: 16px;
  background: linear-gradient(90deg, #1a1c1f 0, #1a1c1f 40%, #2c1c28 55%, #2a1c26 65%, #1a1c1f 85%);
  color: #e8e8e8;
  font-size: 12px;
}
.tb-search {
  margin-left: 28px;
}
.tb-view {
  margin-left: 32px;
}
.tb-links {
  margin-left: 17px;
  font-size: 12.5px;
}
.tb-apps {
  display: flex;
  align-items: center;
  gap: 5px;
  height: 40px;
  margin-left: 987px;
}
.tb-app {
  position: relative;
  display: flex;
  align-items: center;
  justify-content: center;
  width: 41px;
  height: 40px;
  border-bottom: 3px solid #9fd6f5;
}
.tb-app:last-child {
  margin-left: 3px;
}
.tb-app.current {
  width: 48px;
  background: #5a4a52;
}
.badge {
  position: absolute;
  right: 4px;
  bottom: 3px;
  padding: 0 2px;
  border-radius: 4px;
  background: #e5383b;
  color: #fff;
  font-size: 9px;
  font-weight: 400;
}
.tb-tray {
  display: flex;
  align-items: center;
  margin-left: auto;
  padding-right: 25px;
}
.tr-caret {
  margin-left: 26px;
}
.tr-net {
  margin-left: 10.5px;
}
.tr-vol {
  margin-left: 6.5px;
}
.tr-lang {
  margin-left: 11px;
  font-size: 12px;
}
.tr-clock {
  width: 60px;
  margin-left: 9px;
  font-size: 11.5px;
  line-height: 17px;
  text-align: center;
}
.tr-note {
  margin-left: 15px;
}
```
